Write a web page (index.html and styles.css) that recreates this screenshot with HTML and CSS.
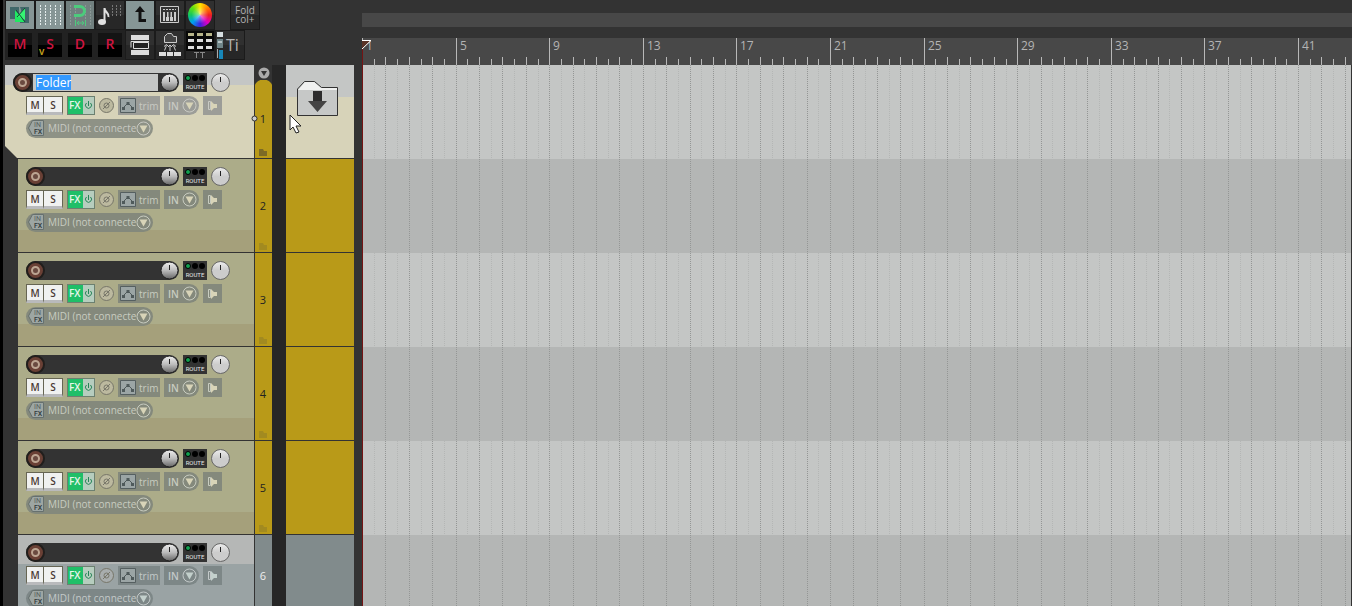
FILE: index.html
```html
<!DOCTYPE html>
<html lang="en">
<head>
  <meta charset="UTF-8">
  <meta name="viewport" content="width=device-width, initial-scale=1.0">
  <title>Arrange View</title>
  <link rel="stylesheet" href="styles.css">
</head>
<body>
  <div class="sidebar">
    <div class="toolbar">
      <div class="tool-row">
        <button class="tool on" aria-label="Auto crossfade">
          <svg width="28" height="28"><path d="M4 6h9v12H4zM14 12h9v10h-9z" fill="#41686a"/><path d="M14 6h9v14l-4 1z" fill="#41686a"/><path d="M9 9l10 12H9z" fill="#20e862"/><path d="M19 7v12l-8-4z" fill="#35f573"/><path d="M10 9l9 12M19 7l-8 9" stroke="#154a38" fill="none"/></svg>
        </button>
        <button class="tool on" aria-label="Grid lines">
          <svg width="28" height="28"><path d="M4.500 4v20M9.500 4v20M14.500 4v20M19.500 4v20M24.500 4v20" stroke="#e4eded" stroke-dasharray="2 1"/></svg>
        </button>
        <button class="tool on dim" aria-label="Snap">
          <svg width="28" height="28"><path d="M4.500 4v20M9.500 4v20M19.500 4v20M24.500 4v20" stroke="#8b9997" stroke-dasharray="2 1"/><path d="M8 5.500h6a4 4 0 0 1 0 9H8" fill="none" stroke="#4ccb7c" stroke-width="3"/><path d="M9.500 19v6M19.500 19v6M11 22h7M13 20l-2 2 2 2M16 20l2 2-2 2" fill="none" stroke="#4ccb7c"/></svg>
        </button>
        <button class="tool" aria-label="Metronome grid">
          <svg width="28" height="28"><ellipse cx="6" cy="21" rx="4" ry="3" fill="#e0e0e0"/><path d="M8.500 21V7c0 4 5 5 4 9" fill="none" stroke="#e0e0e0" stroke-width="2"/><path d="M16.500 4v11M20.500 4v11M24.500 4v11" stroke="#777" stroke-dasharray="2 1"/></svg>
        </button>
        <button class="tool on" aria-label="Ripple edit">
          <svg width="28" height="28"><path d="M14 8v11.500h6" fill="none" stroke="#111" stroke-width="3"/><path d="M14 5l5 6H9z" fill="#111"/></svg>
        </button>
        <button class="tool" aria-label="Piano roll">
          <svg width="28" height="28"><path d="M4.500 5.500h18v16h-18z" fill="#333" stroke="#ccc"/><path d="M7 8.500h13" stroke="#ccc" stroke-dasharray="2 1"/><path d="M7 11h13v9H7z" fill="#ccc"/><path d="M9.500 11v9M13.500 11v9M17.500 11v9" stroke="#333"/><path d="M10 11v5M13.500 11v5M17 11v5" stroke="#333" stroke-width="2"/></svg>
        </button>
        <button class="tool" aria-label="Track colour"><span class="wheel"></span></button>
        <button class="tool text fold">Fold col+</button>
      </div>
      <div class="tool-row">
        <button class="tool letter">M</button>
        <button class="tool letter">S<span class="mark">v</span></button>
        <button class="tool letter">D</button>
        <button class="tool letter">R</button>
        <button class="tool" aria-label="Take lanes">
          <svg width="28" height="28"><path d="M5 4h18v5H5zM5 19h18v5H5z" fill="#ddd"/><path d="M5 16.500v-6h18M7.500 11.500h15v6h-15z" fill="#222" stroke="#ddd"/></svg>
        </button>
        <button class="tool" aria-label="Folder routing">
          <svg width="28" height="28"><path d="M8.500 11.500v-6l3-3h4l2 3h3v6z" fill="#444" stroke="#ccc"/><path d="M8.500 19.500l2-5M14 20v-6M19.500 19.500l-2-5M8 15.500l2.500-2 2 2M20 15.500l-2.500-2-2 2M12 16l2-2 2 2" fill="none" stroke="#ccc"/><path d="M3 21h7v4H3zM11 21h6v4h-6zM18 21h7v4h-7z" fill="#ddd"/></svg>
        </button>
        <button class="tool" aria-label="Item matrix">
          <svg width="28" height="28"><path d="M0 0h28v20H0z" fill="#080808"/><path d="M2 3.500h24" stroke="#b7b58a" stroke-width="3" stroke-dasharray="6 3"/><path d="M2 9.500h24M2 16.500h24" stroke="#ddd" stroke-width="3" stroke-dasharray="6 3"/><path d="M8 21.500h5M14 21.500h5M10.500 21v6M16.500 21v6" stroke="#888"/></svg>
        </button>
        <button class="tool text title"><svg width="8" height="28"><path d="M1 1h6v5H1z" fill="#d5dde0"/><path d="M1 8h6v9H1z" fill="#6f8588"/><path d="M2 11h4" stroke="#fff"/><path d="M1 18h1v9H1z" fill="#aaa"/><path d="M3 19h4v9H3z" fill="#1786b8"/></svg>Ti</button>
      </div>
    </div>
    <div class="tracks" id="tracks"></div>
  </div>
  <div class="arrange">
    <div class="scrollbar"></div>
    <svg class="ruler" id="ruler"></svg>
    <div class="lanes"><svg class="grid" id="grid"></svg></div>
  </div>
  <svg class="cursor" width="14" height="20"><path d="M1 1v15l3-3 3 6 3-1-3-6h5z" fill="#fff" stroke="#222"/></svg>

  <script src="script.js"></script>
</body>
</html>
```

FILE: styles.css
```css
* {
  box-sizing: border-box;
}

body {
  margin: 0;
  height: 100vh;
  display: flex;
  overflow: hidden;
  background: #333;
  font-family: "Open Sans", sans-serif;
  font-size: 10px;
}

button, input, select {
  font: inherit;
  color: inherit;
  margin: 0;
  padding: 0;
  border: 0;
  border-radius: 0;
  background: none;
}

svg {
  display: block;
  flex: none;
}

.sidebar {
  flex: none;
  width: 354px;
  margin-right: 8px;
  border-left: 3px solid #000;
}

/* toolbar */
.toolbar {
  height: 65px;
  padding-left: 2px;
}

.tool-row {
  display: flex;
  height: 30px;
}

.tool {
  position: relative;
  width: 30px;
  height: 30px;
  border: 1px solid #1b1b1b;
  background: linear-gradient(#303030 50%, #272727 50%);
}

.tool.on {
  background: #869696;
}

.tool.dim {
  background: #71807f;
}

.tool.letter {
  padding-bottom: 2px;
  border: 3px solid #222;
  background: linear-gradient(#141414 50%, #000 50%);
  color: #cf1540;
  font-size: 14px;
  font-weight: 600;
  line-height: 20px;
}

.mark {
  position: absolute;
  left: 1px;
  bottom: 0;
  color: #c9a51c;
  font-size: 10px;
  line-height: 12px;
}

.tool.text {
  color: #b4b4b4;
}

.fold {
  margin-left: 15px;
  font-size: 10px;
  line-height: 9px;
}

.title {
  display: flex;
  align-items: center;
  gap: 2px;
  font-size: 16px;
}

.wheel {
  display: block;
  width: 24px;
  height: 24px;
  margin: auto;
  border-radius: 50%;
  background: radial-gradient(#fff8, #fff0 50%), conic-gradient(#ffe600, #ff8000, #f02020, #e000c0, #4020e0, #00a0f0, #10c860, #60e010, #ffe600);
}

/* track list */
.track {
  --body: #acac89;
  --chip: #84897c;
  --chip-text: #c8ccc0;
  --fill: #d8d4b8;
  --color: #b99a18;
  --number: #222;
  display: flex;
  height: 94px;
  background: #262626;
}

.panel-wrap {
  display: flex;
  flex: 1;
  background: #333;
}

.panel {
  flex: 1;
  margin-left: 15px;
  padding: 8px 0 0 8px;
  border-right: 1px solid #333;
  border-bottom: 1px solid #333;
  background: linear-gradient(var(--body) 71px, #a5a07b 71px);
}

.folder {
  --body: #d7d3b9;
  --chip: #9c9d98;
  --chip-text: #c8c9c3;
}

.folder .panel {
  margin-left: 2px;
  background: linear-gradient(#c4c6c5 20px, #d7d3b9 20px);
  clip-path: polygon(0 0, 100% 0, 100% 100%, 13px 100%, 0 81px);
}

.folder .row {
  margin-left: 13px;
}

.folder .midi {
  background: #8e9286;
}

.plain {
  --chip: #7d8787;
  --chip-text: #c3c9c9;
  --fill: #c3d0cc;
  --color: #818b8c;
  --number: #eee;
}

.plain .panel {
  background: linear-gradient(#b5b7b6 29px, #9aa3a4 29px);
}

.row {
  display: flex;
  height: 19px;
  margin-bottom: 4px;
}

.folder .name-row {
  margin-left: 0;
}

.name {
  display: flex;
  width: 153px;
  border-radius: 10px;
  background: #333;
}

.folder .name {
  width: 166px;
}

.name input {
  flex: 1;
  min-width: 0;
  margin: 1px 2px 1px 1px;
  padding: 0 0 1px 3px;
  outline: none;
  color: #222;
  font-size: 12px;
  line-height: 15px;
  caret-color: transparent;
}

.folder .name input {
  background: #c4c6c5;
}

.name input::selection {
  background: #3399ff;
  color: #fff;
}

.round {
  flex: none;
  width: 19px;
  height: 19px;
}

.route {
  width: 24px;
  margin: 0 4px;
  background: #333;
}

.ms {
  width: 18px;
  padding-top: 1px;
  border: 1px solid #666553;
  border-bottom: 3px solid #b9babc;
  background: #f0f1f0;
  color: #4a3a34;
  font-size: 10px;
  font-weight: 600;
  line-height: 14px;
}

.ms + .ms {
  width: 19px;
  border-left: 0;
}

.fx {
  display: flex;
  width: 28px;
  margin: 0 2px 0 4px;
  border: 1px solid #6c8070;
  background: linear-gradient(90deg, #1fbf68 15px, #b6cdbe 15px);
  color: #e6f6ea;
  font-size: 10px;
  font-weight: 600;
  line-height: 17px;
  gap: 3px;
  padding-left: 1px;
}

.env, .in, .spk {
  display: flex;
  align-items: center;
  background: var(--chip);
  color: var(--chip-text);
}

.env {
  width: 42px;
  margin-left: 2px;
  padding-left: 2px;
  gap: 3px;
}

.in {
  width: 35px;
  margin: 0 4px;
  padding-left: 4px;
  gap: 3px;
  border-radius: 0 10px 10px 0;
  font-weight: 600;
}

.spk {
  width: 19px;
}

.midi {
  display: flex;
  align-items: center;
  width: 127px;
  padding-right: 2px;
  border-radius: 10px;
  background: var(--chip);
  color: var(--chip-text);
}

.midi select {
  flex: 1;
  min-width: 0;
  height: 19px;
  margin-left: 4px;
  padding-bottom: 1px;
  appearance: none;
  overflow: hidden;
  text-overflow: clip;
  font-size: 10px;
  font-weight: 500;
}

.index {
  position: relative;
  width: 17px;
  padding: 38px 1px 0 0;
  border-bottom: 1px solid #333;
  background: var(--color);
  color: var(--number);
  font-size: 11px;
  text-align: center;
  line-height: 17px;
}

.folder .index {
  border-top: 15px solid #333;
  padding-top: 30px;
  background: radial-gradient(circle at 50% 9px, #b99a18 9px, #333 10px) 0 0 / 100% 8px no-repeat, linear-gradient(#333 8px, #b99a18 8px);
}

.plain .index {
  padding-top: 32px;
}

.mini {
  position: absolute;
  left: 4px;
  bottom: 2px;
}

.collapse {
  position: absolute;
  left: 3px;
  top: -13px;
}

.pin {
  position: absolute;
  left: -4px;
  top: 35px;
}

.media {
  width: 68px;
  margin-left: 14px;
  border-bottom: 1px solid #333;
  background: var(--color);
}

.folder .media {
  padding: 16px 0 0 11px;
  background: linear-gradient(#c4c6c5 32px, #d7d3b9 32px);
}

/* arrange area */
.arrange {
  flex: 1;
  display: flex;
  flex-direction: column;
  min-width: 0;
  padding-top: 13px;
}

.scrollbar {
  height: 14px;
  background: #484848;
}

.ruler {
  width: 100%;
  height: 27px;
  margin-top: 11px;
  background: #484848;
  font-size: 12px;
}

.lanes {
  flex: 1;
  min-height: 0;
  margin-right: 1px;
  overflow: hidden;
  border-left: 1px solid #741414;
  background: repeating-linear-gradient(#c4c6c5 0 94px, #b4b6b5 94px 188px);
}

.grid {
  width: 100%;
  height: 100%;
}

.cursor {
  position: absolute;
  left: 289px;
  top: 114px;
}
```

FILE: script.js
```js
const tracks = [
  { name: 'Folder', type: 'folder' },
  { name: '', type: '' },
  { name: '', type: '' },
  { name: '', type: '' },
  { name: '', type: '' },
  { name: '', type: 'plain' }
];

const knob = (id, dark) => `
  <svg class="round" viewBox="0 0 19 19">
    <defs><linearGradient id="${id}" x2="0" y2="1"><stop offset="0" stop-color="#eee"/><stop offset=".5" stop-color="${dark ? '#bbb' : '#ccc'}"/><stop offset="1" stop-color="${dark ? '#666' : '#ccc'}"/></linearGradient></defs>
    <circle cx="9.500" cy="9.500" r="${dark ? 8.5 : 9}" fill="url(#${id})" stroke="${dark ? '#222' : '#666'}"/>
    <path d="M9.500 4v5" stroke="#222"/>
  </svg>`;

const arrow = `
  <svg width="15" height="15"><circle cx="7.500" cy="7.500" r="6.500" fill="none" stroke="var(--chip-text)"/><path d="M3.500 4.500h8l-4 7z" fill="var(--fill)"/></svg>`;

function trackHtml(track, i) {
  const n = i + 1;
  const folder = track.type === 'folder';
  return `
  <div class="track ${track.type}">
    <div class="panel-wrap"><div class="panel">
      <div class="row name-row">
        <div class="name">
          <button class="round" aria-label="Record arm"><svg width="19" height="19"><circle cx="9.500" cy="9.500" r="8.500" fill="#6a4035" stroke="#211e1c" stroke-width="2"/><circle cx="9.500" cy="9.500" r="3.500" fill="#6a4a40" stroke="#bda592" stroke-width="2"/></svg></button>
          <input type="text" id="name${n}" aria-label="Track name" value="${track.name}" spellcheck="false">
          ${knob('vol' + n, true)}
        </div>
        <button class="route" aria-label="Route"><svg width="24" height="19"><circle cx="5" cy="5" r="2.500" fill="#12a050" stroke="#000"/><circle cx="12" cy="5" r="3" fill="#000"/><circle cx="19" cy="5" r="3" fill="#000"/><text x="12" y="16" text-anchor="middle" font-family="Roboto" font-size="6" fill="#e4e4e4">ROUTE</text></svg></button>
        ${knob('pan' + n, false)}
      </div>
      <div class="row">
        <button class="ms">M</button><button class="ms">S</button>
        <button class="fx">FX<svg width="9" height="17"><path d="M2.500 6a3 3 0 1 0 4 0M4.500 4v5" fill="none" stroke="#258457"/></svg></button>
        <svg width="19" height="19"><circle cx="9.500" cy="9.500" r="7" fill="${track.type === 'plain' ? '#a8adad' : '#bcb99f'}" stroke="#777669"/><circle cx="9.500" cy="9.500" r="2.500" fill="none" stroke="#777669"/><path d="M6 13l7-7" stroke="#777669"/></svg>
        <button class="env"><svg width="16" height="15"><path d="M.5.5h15v14H.5z" fill="#9ba5a5" stroke="#555f60"/><path d="M3 10l5-5 5 5" fill="none" stroke="#4f5a5b"/><path d="M2 9h3v3H2zM6.500 4h3v3h-3zM11 9h3v3h-3z" fill="#4f5a5b"/></svg>trim</button>
        <button class="in">IN${arrow}</button>
        <button class="spk" aria-label="Monitor"><svg width="19" height="19"><path d="M5.500 5.500h2v8h-2z" fill="none" stroke="var(--chip-text)"/><path d="M8 5l3 3h3v4h-3l-3 3z" fill="var(--fill)"/></svg></button>
      </div>
      <div class="row">
        <div class="midi">
          <svg width="18" height="19"><path d="M6.500 1.500h11v15h-11l-4-7.500z" fill="#9da6a3" stroke="#66706e"/><text x="8" y="8" font-family="Roboto" font-size="7" fill="#59615f">IN</text><text x="8" y="15" font-family="Roboto" font-size="7" font-weight="500" fill="#333b3b">FX</text></svg>
          <select aria-label="Track input"><option>MIDI (not connected)</option></select>
          ${arrow}
        </div>
      </div>
    </div></div>
    <div class="index">
      ${n}
      ${folder ? `
      <svg class="collapse" width="12" height="12"><circle cx="6" cy="6" r="5.500" fill="#aaa"/><path d="M3 4h6L6 9z" fill="#333"/></svg>
      <svg class="pin" width="7" height="7"><circle cx="3.500" cy="3.500" r="2.500" fill="#ccc" stroke="#333"/></svg>` : ''}
      ${track.type === 'plain' ? '' : `<svg class="mini" width="8" height="7"><path d="M0 0h4l1 2h3v5H0z" fill="${folder ? '#7c6a25' : '#a28a20'}"/></svg>`}
    </div>
    <div class="media">
      ${folder ? `
      <svg width="42" height="36"><path d="M.5 34.500V8l7-7.500h10l7 6h16v28z" fill="#c6c8c7" stroke="#333"/><path d="M1 9l7-8h9l7 6h16v2z" fill="#f0f1f0"/><path d="M16 10h9v10h5L20.500 31 11 20h5z" fill="#444"/><path d="M16 10h9v10h-9z" fill="#2c2c2c"/></svg>` : ''}
    </div>
  </div>`;
}

document.getElementById('tracks').innerHTML = tracks.map(trackHtml).join('');

// half a measure, in pixels
const step = 11.7;

function drawTimeline() {
  const ruler = document.getElementById('ruler');
  const grid = document.getElementById('grid');
  const width = ruler.clientWidth;
  let marks = '';
  let lines = '';

  for (let i = 0; i * step < width - 2; i++) {
    const x = Math.round(i * step);
    const top = i % 8 === 0 ? 0 : i % 2 === 0 ? 19 : 21;
    marks += `<path d="M${x + 0.5} ${top}V27" stroke="#b8b8b8"/>`;
    if (i % 8 === 0) {
      marks += `<text x="${x + 4}" y="12" fill="#b4b4b4">${i / 2 + 1}</text>`;
    }
    if (i > 0) {
      lines += `<path d="M${x - 0.5} 0V2000" stroke="${i % 2 === 0 ? '#949695' : '#b4b6b5'}" stroke-dasharray="1 1"/>`;
    }
  }

  // edit cursor marker
  marks += '<path d="M0 2h9L0 11z" fill="#5a3326"/><path d="M0 2.500h9L0 11" fill="none" stroke="#fff"/><path d="M.5 11v16" stroke="#741414"/>';
  ruler.innerHTML = marks;
  grid.innerHTML = lines;
}

drawTimeline();
window.addEventListener('resize', drawTimeline);

const nameBox = document.getElementById('name1');
nameBox.focus();
nameBox.select();
```
